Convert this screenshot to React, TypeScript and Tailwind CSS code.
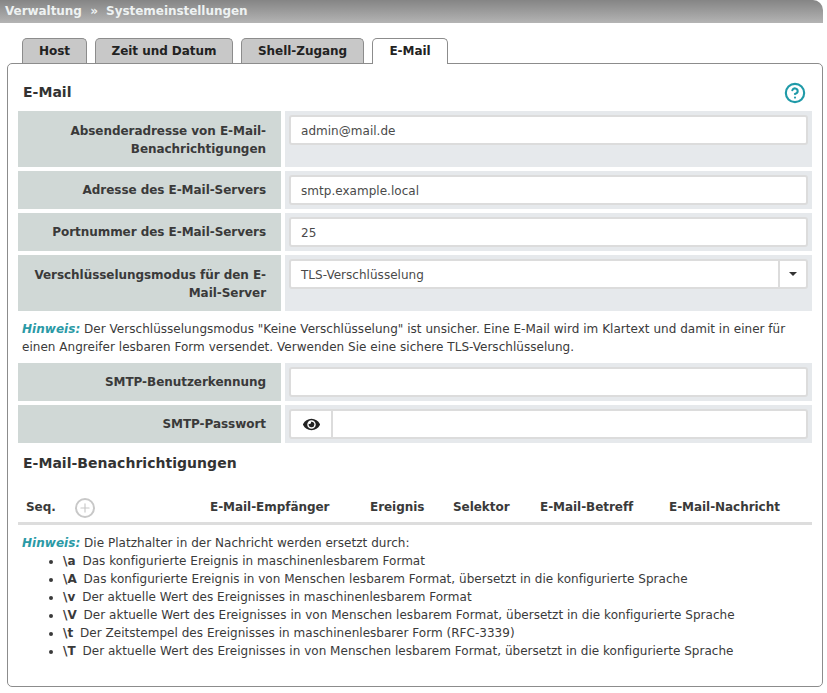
import { CircleHelp, Plus } from 'lucide-react';
import { FaEye } from 'react-icons/fa';

const tabClass = 'h-[25px] border border-b-0 border-[#8c8c8c] rounded-t-[5px] font-bold text-[12px] tracking-[-0.05px] text-[#222] flex items-center justify-center';

function Row({ label, children, tall }: { label: React.ReactNode; children: React.ReactNode; tall?: boolean }) {
  return (
    <div className={`flex gap-1 ${tall ? 'h-14' : 'h-[38px]'}`}>
      <div className={`w-[263px] bg-[#d0d8d6] pr-[15px] text-right font-bold text-[12px] tracking-[-0.05px] leading-[18px] text-[#3a3a3a] ${tall ? 'pt-[11px]' : 'pt-[10px]'}`}>
        {label}
      </div>
      <div className="w-[527px] bg-[#e6e9ec] p-1">{children}</div>
    </div>
  );
}

function TextBox({ value }: { value?: string }) {
  return (
    <div className="h-[30px] border-2 border-[#dcdcdc] rounded-[3px] bg-white pl-[10px] pt-px text-[12px] leading-[26px] text-[#4a4a4a] tracking-[0.03px]">
      {value}
    </div>
  );
}

function Hint() {
  return <b className="italic text-[#2a9aa6]">Hinweis:</b>;
}

const placeholders = [
  ['\\a', 'Das konfigurierte Ereignis in maschinenlesbarem Format'],
  ['\\A', 'Das konfigurierte Ereignis in von Menschen lesbarem Format, übersetzt in die konfigurierte Sprache'],
  ['\\v', 'Der aktuelle Wert des Ereignisses in maschinenlesbarem Format'],
  ['\\V', 'Der aktuelle Wert des Ereignisses in von Menschen lesbarem Format, übersetzt in die konfigurierte Sprache'],
  ['\\t', 'Der Zeitstempel des Ereignisses in maschinenlesbarer Form (RFC-3339)'],
  ['\\T', 'Der aktuelle Wert des Ereignisses in von Menschen lesbarem Format, übersetzt in die konfigurierte Sprache'],
];

export default function App() {
  return (
    <div className="w-[823px] h-[693px] bg-white font-['DejaVu_Sans',sans-serif] text-[12px] text-[#3a3a3a] tracking-[0.03px]">
      <div className="h-[23px] rounded-tr-[10px] bg-gradient-to-b from-[#858585] to-[#b4b4b4] pl-[5px] font-bold text-[12px] tracking-[-0.05px] leading-[23px] text-[#eef2f2]">
        Verwaltung&nbsp; »&nbsp; Systemeinstellungen
      </div>

      <div className="mt-[15px] flex gap-2 pl-[22px] h-[25px] relative z-10">
        <div className={`${tabClass} bg-[#c8c8c8] w-[65px]`}>Host</div>
        <div className={`${tabClass} bg-[#c8c8c8] w-[138px]`}>Zeit und Datum</div>
        <div className={`${tabClass} bg-[#c8c8c8] w-[123px]`}>Shell-Zugang</div>
        <div className={`${tabClass} bg-white w-[76px] !h-[26px] pb-px`}>E-Mail</div>
      </div>

      <div className="ml-[7px] h-[624px] w-[816px] border border-[#8c8c8c] rounded-[5px] pl-[10px]">
        <div className="flex h-[47px] items-start justify-between pr-4">
          <h2 className="pl-[5px] pt-5 font-bold text-[14px] leading-4 text-[#333]">E-Mail</h2>
          <CircleHelp className="mt-[18px] h-[22px] w-[22px] text-[#1f9aa8]" strokeWidth={2.3} />
        </div>

        <div className="flex flex-col gap-1">
          <Row tall label={<>Absenderadresse von E-Mail-<br />Benachrichtigungen</>}>
            <TextBox value="admin@mail.de" />
          </Row>
          <Row label="Adresse des E-Mail-Servers"><TextBox value="smtp.example.local" /></Row>
          <Row label="Portnummer des E-Mail-Servers"><TextBox value="25" /></Row>
          <Row tall label={<>Verschlüsselungsmodus für den E-<br />Mail-Server</>}>
            <div className="flex h-[30px] border-2 border-[#dcdcdc] rounded-[3px] bg-white">
              <div className="flex-1 pl-[10px] pt-px text-[12px] leading-[26px] text-[#4a4a4a]">TLS-Verschlüsselung</div>
              <div className="flex w-7 items-center justify-center border-l-2 border-[#dcdcdc]">
                <div className="h-0 w-0 border-x-4 border-t-4 border-x-transparent border-t-[#333]" />
              </div>
            </div>
          </Row>
        </div>

        <p className="h-[52px] pl-1 pt-[9px] leading-[18px]">
          <Hint /> Der Verschlüsselungsmodus "Keine Verschlüsselung" ist unsicher. Eine E-Mail wird im Klartext und damit in einer für<br />
          einen Angreifer lesbaren Form versendet. Verwenden Sie eine sichere TLS-Verschlüsselung.
        </p>

        <div className="flex flex-col gap-1">
          <Row label="SMTP-Benutzerkennung"><TextBox /></Row>
          <Row label="SMTP-Passwort">
            <div className="flex h-[30px] border-2 border-[#dcdcdc] rounded-[3px] bg-white">
              <div className="flex w-[42px] items-center justify-center border-r-2 border-[#dcdcdc]">
                <FaEye className="h-[17px] w-[17px] text-[#222]" />
              </div>
            </div>
          </Row>
        </div>

        <h2 className="pl-[5px] pt-3 font-bold text-[14px] leading-4 text-[#333]">E-Mail-Benachrichtigungen</h2>

        <div className="mt-5 flex h-[34px] w-[794px] items-center border-b-[3px] border-[#dddddd] font-bold text-[12px] tracking-[-0.05px] text-[#3a3a3a]">
          <span className="w-[50px] pl-2">Seq.</span>
          <span className="flex h-5 w-[142px] items-center">
            <span className="ml-[7px] mt-0.5 flex h-5 w-5 shrink-0 items-center justify-center rounded-full border-2 border-[#c8c8c8]">
              <Plus className="h-[14px] w-[14px] text-[#c8c8c8]" strokeWidth={2} />
            </span>
          </span>
          <span className="w-[160px]">E-Mail-Empfänger</span>
          <span className="w-[83px]">Ereignis</span>
          <span className="w-[87px]">Selektor</span>
          <span className="w-[129px]">E-Mail-Betreff</span>
          <span>E-Mail-Nachricht</span>
        </div>

        <div className="pl-1 pt-[9px] leading-[18px]">
          <Hint /> Die Platzhalter in der Nachricht werden ersetzt durch:
          <ul className="list-disc pl-[41px]">
            {placeholders.map(([code, text]) => (
              <li key={code}><b className="mr-[3px] text-[12px]">{code}</b>{' '}{text}</li>
            ))}
          </ul>
        </div>
      </div>
    </div>
  );
}
